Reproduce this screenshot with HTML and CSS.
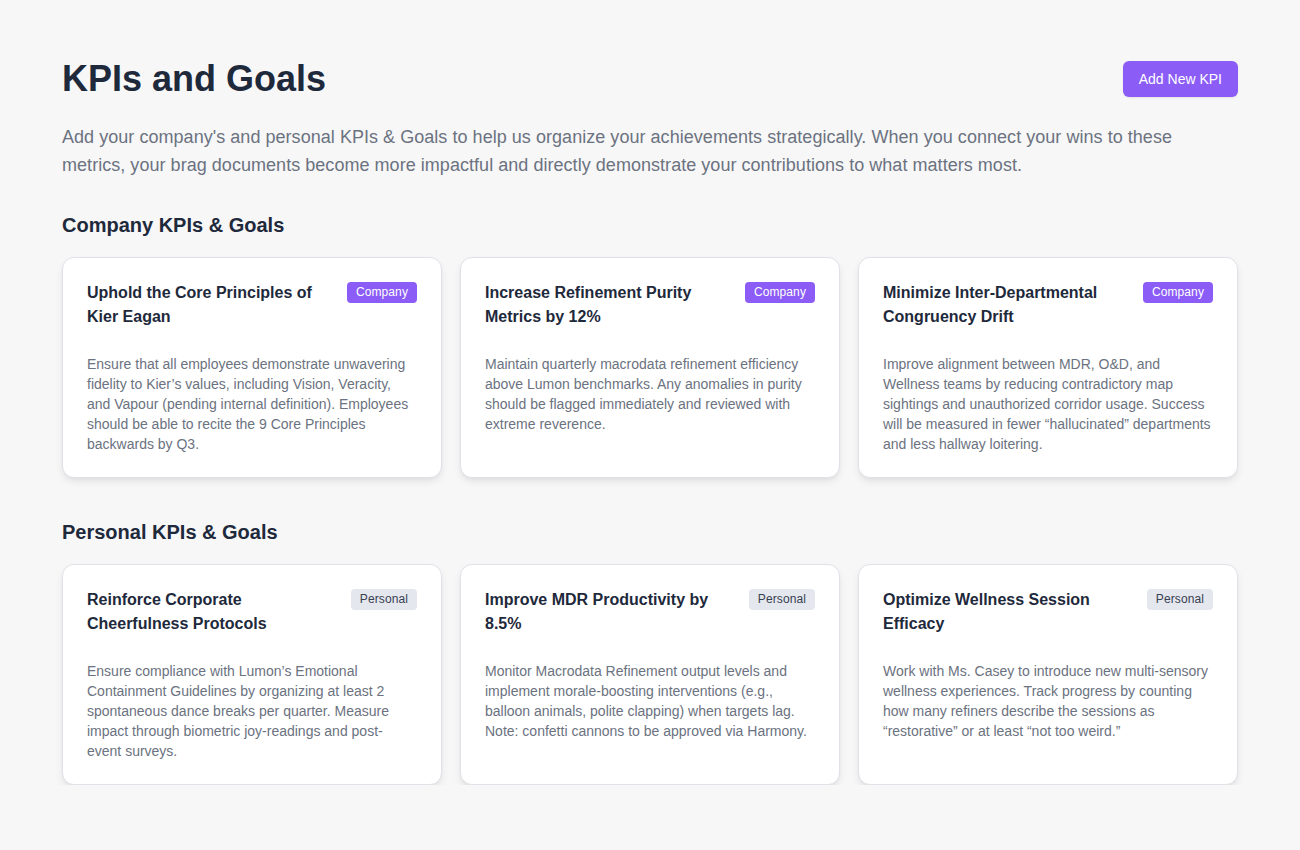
FILE: index.html
```html
<!DOCTYPE html>
<html lang="en">
<head>
<meta charset="utf-8">
<title>KPIs and Goals</title>
<link rel="stylesheet" href="styles.css">
</head>
<body>
<main class="page">
  <header class="page-head">
    <h1 class="page-title">KPIs and Goals</h1>
    <button class="btn-primary">Add New KPI</button>
  </header>
  <p class="intro">Add your company's and personal KPIs &amp; Goals to help us organize your achievements strategically. When you connect your wins to these metrics, your brag documents become more impactful and directly demonstrate your contributions to what matters most.</p>

  <section class="section">
    <h2 class="section-title">Company KPIs &amp; Goals</h2>
    <div class="grid">
      <article class="card">
        <div class="card-head">
          <h3 class="card-title">Uphold the Core Principles of Kier Eagan</h3>
          <span class="badge badge-company">Company</span>
        </div>
        <p class="card-body">Ensure that all employees demonstrate unwavering fidelity to Kier’s values, including Vision, Veracity, and Vapour (pending internal definition). Employees should be able to recite the 9 Core Principles backwards by Q3.</p>
      </article>
      <article class="card">
        <div class="card-head">
          <h3 class="card-title">Increase Refinement Purity Metrics by 12%</h3>
          <span class="badge badge-company">Company</span>
        </div>
        <p class="card-body">Maintain quarterly macrodata refinement efficiency above Lumon benchmarks. Any anomalies in purity should be flagged immediately and reviewed with extreme reverence.</p>
      </article>
      <article class="card">
        <div class="card-head">
          <h3 class="card-title">Minimize Inter-Departmental Congruency Drift</h3>
          <span class="badge badge-company">Company</span>
        </div>
        <p class="card-body">Improve alignment between MDR, O&amp;D, and Wellness teams by reducing contradictory map sightings and unauthorized corridor usage. Success will be measured in fewer “hallucinated” departments and less hallway loitering.</p>
      </article>
    </div>
  </section>

  <section class="section">
    <h2 class="section-title">Personal KPIs &amp; Goals</h2>
    <div class="grid">
      <article class="card">
        <div class="card-head">
          <h3 class="card-title">Reinforce Corporate Cheerfulness Protocols</h3>
          <span class="badge badge-personal">Personal</span>
        </div>
        <p class="card-body">Ensure compliance with Lumon’s Emotional Containment Guidelines by organizing at least 2 spontaneous dance breaks per quarter. Measure impact through biometric joy-readings and post-event surveys.</p>
      </article>
      <article class="card">
        <div class="card-head">
          <h3 class="card-title">Improve MDR Productivity by 8.5%</h3>
          <span class="badge badge-personal">Personal</span>
        </div>
        <p class="card-body">Monitor Macrodata Refinement output levels and implement morale-boosting interventions (e.g., balloon animals, polite clapping) when targets lag. Note: confetti cannons to be approved via Harmony.</p>
      </article>
      <article class="card">
        <div class="card-head">
          <h3 class="card-title">Optimize Wellness Session Efficacy</h3>
          <span class="badge badge-personal">Personal</span>
        </div>
        <p class="card-body">Work with Ms. Casey to introduce new multi-sensory wellness experiences. Track progress by counting how many refiners describe the sessions as “restorative” or at least “not too weird.”</p>
      </article>
    </div>
  </section>
</main>
</body>
</html>
```

FILE: styles.css
```css
* { box-sizing: border-box; }

html, body {
  margin: 0;
  padding: 0;
}

body {
  background: #f7f7f8;
  font-family: "Liberation Sans", Arial, Helvetica, sans-serif;
  color: #1e293b;
}

.page {
  width: 1176px;
  margin: 0 auto;
  padding-top: 59px;
}

.page-head {
  display: flex;
  align-items: center;
  justify-content: space-between;
}

.page-title {
  margin: 0;
  font-size: 36px;
  line-height: 40px;
  font-weight: 700;
  color: #1e293b;
}

.btn-primary {
  height: 36px;
  padding: 0 16px;
  border: none;
  border-radius: 6px;
  background: #8b5cf6;
  color: #ffffff;
  font-family: inherit;
  font-size: 14px;
  box-shadow: 0 1px 2px rgba(0,0,0,0.08);
  cursor: pointer;
}

.intro {
  margin: 24px 0 0;
  max-width: 1150px;
  font-size: 18px;
  line-height: 28px;
  letter-spacing: 0.04px;
  color: #6b7280;
}

.section {
  margin-top: 32px;
}

.section + .section {
  margin-top: 40px;
}

.section-title {
  margin: 0 0 18px;
  font-size: 20px;
  line-height: 28px;
  font-weight: 700;
  color: #1e293b;
}

.grid {
  display: grid;
  grid-template-columns: repeat(3, 1fr);
  gap: 18px;
}

.card {
  background: #ffffff;
  border: 1px solid #e0e2e8;
  border-radius: 12px;
  padding: 23px 24px 23px 24px;
  box-shadow: 0 4px 8px -1px rgba(0,0,0,0.09), 0 2px 4px -2px rgba(0,0,0,0.07);
}

.card-head {
  display: flex;
  align-items: flex-start;
  justify-content: space-between;
  gap: 16px;
}

.card-title {
  margin: 0;
  font-size: 16px;
  line-height: 24px;
  font-weight: 700;
  color: #1e293b;
  max-width: 240px;
}

.badge {
  flex: none;
  margin-top: 1px;
  padding: 0 9px;
  height: 21px;
  line-height: 21px;
  border-radius: 4px;
  font-size: 12px;
  letter-spacing: 0.1px;
}

.badge-company {
  background: #8b5cf6;
  color: #ffffff;
}

.badge-personal {
  background: #e5e7ef;
  color: #374151;
}

.card-body {
  margin: 25px 1.5px 0 0;
  font-size: 14px;
  line-height: 20px;
  color: #6b7280;
}
```
